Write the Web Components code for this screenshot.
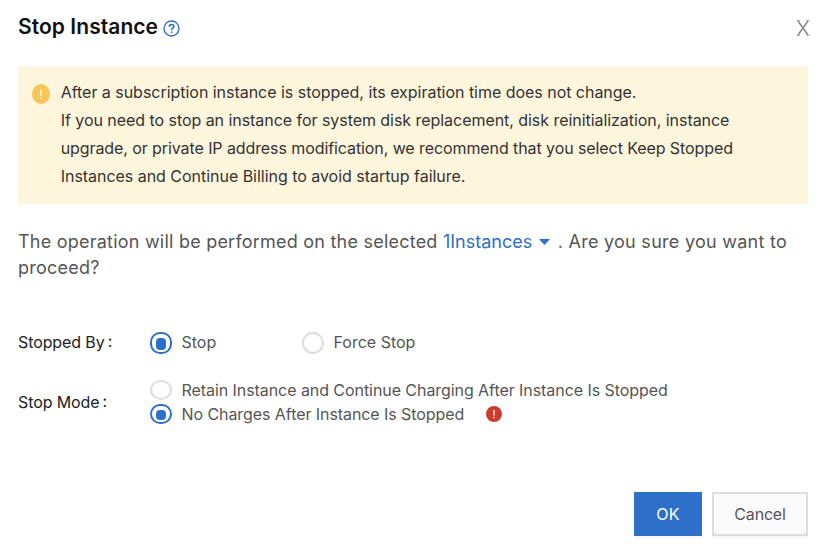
<!DOCTYPE html>
<html lang="en">
<head>
<meta charset="utf-8">
<title>Stop Instance</title>
<style>
html,body{margin:0;background:#fff}
body{font-family:Inter,"Liberation Sans",sans-serif;font-size:16px;color:#555;width:826px;height:550px;overflow:hidden}
</style>
</head>
<body>
<stop-dialog></stop-dialog>
<script>
function define(name, markup) {
  const template = document.createElement('template');
  template.innerHTML = markup;
  customElements.define(name, class extends HTMLElement {
    constructor() {
      super();
      this.attachShadow({mode: 'open'}).append(template.content.cloneNode(true));
    }
  });
}

define('dialog-header', `
<style>
:host{display:flex;align-items:center;height:54px;padding:0 15px 0 18px}
.title{font-size:21px;font-weight:600;color:#111;letter-spacing:.06px;line-height:28px;white-space:nowrap}
.help{margin:2px 0 0 4.5px;flex:none}
.close{margin:2px 0 0 auto;flex:none}
</style>
<span class="title"><slot></slot></span>
<svg class="help" width="17" height="17" viewBox="0 0 17 17" fill="none" stroke="#2e6fca">
<circle cx="8.5" cy="8.5" r="7.5" stroke-width="1.3"/>
<path d="M6.2 6.8C6.2 5.3 7.1 4.5 8.5 4.5S10.9 5.3 10.9 6.6C10.9 8 8.6 8.2 8.6 10.1" stroke-width="1.6"/>
<path d="M8.6 11.4v1.5" stroke-width="1.6"/></svg>
<svg class="close" width="16" height="18" viewBox="0 0 16 18" fill="none" stroke="#888">
<path d="M3 2L13 16M13 2L3 16" stroke-width="1.5"/>
<path d="M1.5 1.5h3.5M11 1.5h3.5M1.5 16.3h3.5M11 16.3h3.5" stroke-width=".7"/></svg>
`);

define('notice-box', `
<style>
:host{display:flex;align-items:flex-start;box-sizing:border-box;height:138px;margin:12px 18px 0;padding:12px 14px;background:#fef5dd;color:#333;line-height:28px}
svg{flex:none;margin:6px 10.7px 0 0}
</style>
<svg width="18" height="20" viewBox="0 0 18 20"><ellipse cx="9" cy="10" rx="9" ry="10" fill="#f6c65b"/><path d="M9 5.2v6.4M9 13.2v1.8" stroke="#fef0cc" stroke-width="1.7"/></svg>
<div><slot></slot></div>
`);

define('text-line', `<style>:host{display:block;white-space:nowrap}</style><slot></slot>`);

define('instance-link', `
<style>:host{color:#2e6fca;letter-spacing:0}svg{margin:0 7.5px 3px 7px}</style><slot></slot><svg width="11" height="6" viewBox="0 0 11 6"><path d="M0 0h11L5.5 6z" fill="#2e6fca"/></svg>`);

define('form-label', `
<style>:host{display:flex;align-items:center;color:#222;white-space:nowrap;line-height:24px;letter-spacing:-.1px}
.colon{margin:-2px 0 0 3px}</style>
<span><slot></slot></span><span class="colon">:</span>`);

define('radio-option', `
<style>
:host{display:flex;align-items:center;gap:9.5px;height:24px;line-height:24px;white-space:nowrap;--h:20px;--dot:10px}
i{box-sizing:border-box;flex:none;width:22px;height:var(--h);border:2px solid #ddd;border-radius:50%;display:grid;place-items:center}
:host([checked]) i{border-color:#2e6fca;border-radius:10px}
:host([checked]) i::before{content:"";width:10px;height:var(--dot);border-radius:4px;background:#2e6fca;margin-top:2px}
:host([tall]){--h:22px;--dot:12px}
:host([tall]) span{margin-top:-2px}
</style><i></i><span><slot></slot></span><slot name="after"></slot>`);

define('error-badge', `
<style>:host{display:block;margin-left:12px;width:16px;height:16px}svg{display:block}</style>
<svg width="16" height="16" viewBox="0 0 16 16"><circle cx="8" cy="8" r="8" fill="#c93c2e"/><path d="M8 4v5.4M8 10.8v1.5" stroke="#f7d5d1" stroke-width="1.6"/></svg>`);

define('action-button', `
<style>
:host{display:grid;place-items:center;box-sizing:border-box;width:96px;height:44px;border:2px solid #ddd;background:#fafafa;color:#555;letter-spacing:-.2px;box-shadow:0 3px 1px #f8f8f8}
:host([primary]){width:68px;border-color:#2e6fca;background:#2e6fca;color:#fff;letter-spacing:.3px}
</style><slot></slot>`);

define('stop-dialog', `
<style>
:host{display:flex;flex-direction:column;width:826px;height:550px;background:#fff}
.message{margin:25px 18px 0;font-size:18px;line-height:26px;letter-spacing:.225px}
.tail{letter-spacing:.27px}
form{display:grid;grid-template-columns:132px 1fr;row-gap:23px;margin:50px 18px 0;align-items:center}
.inline{display:grid;grid-template-columns:152px auto;justify-content:start;height:24px}
.raised{margin-top:-2px}
footer{display:flex;justify-content:flex-end;gap:10px;margin:auto 18px 14px}
</style>
<dialog-header>Stop Instance</dialog-header>
<notice-box>
<text-line style="letter-spacing:-.03px">After a subscription instance is stopped, its expiration time does not change.</text-line>
<text-line style="letter-spacing:-.048px">If you need to stop an instance for system disk replacement, disk reinitialization, instance</text-line>
<text-line style="letter-spacing:-.087px">upgrade, or private IP address modification, we recommend that you select Keep Stopped</text-line>
<text-line style="letter-spacing:-.03px">Instances and Continue Billing to avoid startup failure.</text-line>
</notice-box>
<div class="message">
<text-line>The operation will be performed on the selected <instance-link>1Instances</instance-link><span class="tail">. Are you sure you want to</span></text-line>
<text-line>proceed?</text-line>
</div>
<form>
<form-label class="raised">Stopped By</form-label>
<div class="inline"><radio-option checked tall>Stop</radio-option><radio-option tall>Force Stop</radio-option></div>
<form-label>Stop Mode</form-label>
<div>
<radio-option style="letter-spacing:-.065px">Retain Instance and Continue Charging After Instance Is Stopped</radio-option>
<radio-option checked style="letter-spacing:-.07px">No Charges After Instance Is Stopped<error-badge slot="after"></error-badge></radio-option>
</div>
</form>
<footer><action-button primary>OK</action-button><action-button>Cancel</action-button></footer>
`);
</script>
</body>
</html>
